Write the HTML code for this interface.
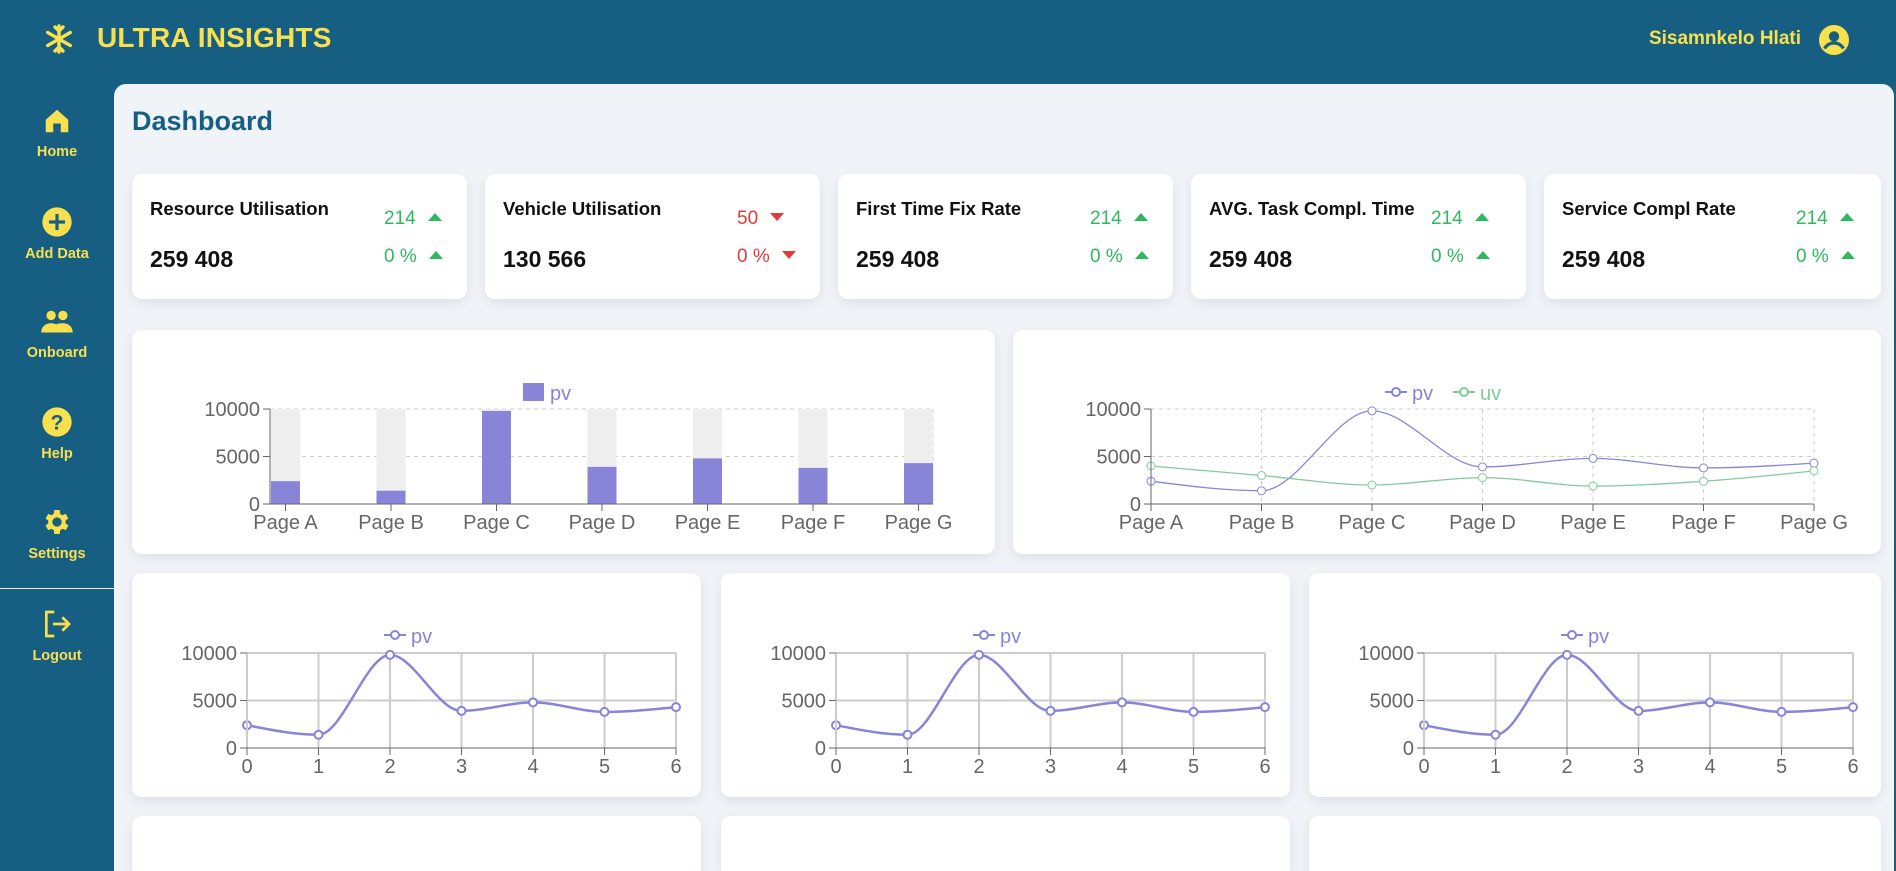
<!DOCTYPE html>
<html><head><meta charset="utf-8">
<style>
*{box-sizing:border-box;margin:0;padding:0}
html,body{width:1896px;height:871px;overflow:hidden}
body{background:#165f82;font-family:"Liberation Sans",Arial,sans-serif;position:relative}
.top{position:absolute;left:0;top:0;width:1896px;height:84px}
.logo{position:absolute;left:44px;top:24px}
.brand{position:absolute;left:97px;top:22px;color:#f8e04e;font-weight:bold;font-size:28px;letter-spacing:0.2px}
.user{position:absolute;right:95px;top:28px;color:#f8e04e;font-weight:bold;font-size:19px}
.uicon{position:absolute;left:1818px;top:24px}
.side a{position:absolute;left:0;width:114px;text-align:center;color:#f8e04e;font-size:14.5px;font-weight:bold;text-decoration:none}
.side svg{display:block;margin:0 auto 8px}
.divl{position:absolute;left:0;top:588px;width:114px;height:1px;background:#e8eef4}
.main{position:absolute;left:114px;top:84px;width:1780px;height:787px;background:#f0f3f8;border-radius:12px 12px 0 0;overflow:hidden}
h1{position:absolute;left:18px;top:22px;color:#165f82;font-size:27px;font-weight:bold}
.card{position:absolute;background:#fff;border-radius:10px;box-shadow:0 4px 12px rgba(0,0,20,0.08)}
.bot{border-radius:10px 10px 0 0;height:55px}
.stat .t{position:absolute;left:18px;top:24px;font-weight:bold;font-size:18.5px;color:#111}
.stat .v{position:absolute;left:18px;top:72px;font-weight:bold;font-size:23px;color:#111}
.stat .r{position:absolute;left:252px;font-size:19px}
.g{color:#2eb860}.rd{color:#e23b3b}
.tri{display:inline-block;width:0;height:0;border-left:7px solid transparent;border-right:7px solid transparent;margin-left:12px;vertical-align:middle}
.up{border-bottom:8px solid #2eb860;margin-top:-4px}
.dn{border-top:8px solid #e23b3b;margin-top:-4px}
svg text{font-family:"Liberation Sans",Arial,sans-serif}
</style></head><body>
<div class="top">
<svg class="logo" width="30" height="30" viewBox="0 0 30 30" stroke="#f8e04e" stroke-width="3.4" fill="none" stroke-linecap="round"><path d="M15 2v26M3.7 8.5l22.6 13M3.7 21.5l22.6-13M11 3l4 4 4-4M11 27l4-4 4 4"/></svg>
<div class="brand">ULTRA INSIGHTS</div>
<div class="user">Sisamnkelo Hlati</div>
<svg class="uicon" width="32" height="32" viewBox="0 0 32 32"><circle cx="16" cy="16" r="15" fill="#f8e04e"/><circle cx="16" cy="12.5" r="5.2" fill="#165f82"/><path d="M6.5 24.5c2.5-4 6-5.5 9.5-5.5s7 1.5 9.5 5.5" stroke="#165f82" stroke-width="3.2" fill="none"/></svg>
</div>
<div class="side">
<a style="top:106px"><svg width="30" height="30" viewBox="0 0 24 24"><path d="M12 3L3 11v10h6v-7h6v7h6V11z" fill="#f8e04e"/></svg>Home</a>
<a style="top:206px"><svg width="32" height="32" viewBox="0 0 24 24"><circle cx="12" cy="12" r="11" fill="#f8e04e"/><path d="M12 6v12M6 12h12" stroke="#165f82" stroke-width="2.4"/></svg>Add Data</a>
<a style="top:307px"><svg width="34" height="30" viewBox="0 0 26 22"><circle cx="8.5" cy="6" r="3.6" fill="#f8e04e"/><circle cx="17.5" cy="6" r="3.6" fill="#f8e04e"/><path d="M1 19c0-5 4-7 7.5-7s7.5 2 7.5 7zM14 19c0-3-1-5-2-6 2-1 4-1 5.5-1 3.5 0 7.5 2 7.5 7z" fill="#f8e04e"/></svg>Onboard</a>
<a style="top:406px"><svg width="32" height="32" viewBox="0 0 24 24"><circle cx="12" cy="12" r="11" fill="#f8e04e"/><text x="12" y="17.5" text-anchor="middle" font-size="16" font-weight="bold" fill="#165f82">?</text></svg>Help</a>
<a style="top:506px"><svg width="32" height="32" viewBox="0 0 24 24"><path fill="#f8e04e" d="M19.4 13a7.5 7.5 0 000-2l2.1-1.6-2-3.5-2.5 1a7.4 7.4 0 00-1.7-1L15 3h-4l-.4 2.9a7.4 7.4 0 00-1.7 1l-2.5-1-2 3.5L6.5 11a7.5 7.5 0 000 2l-2.1 1.6 2 3.5 2.5-1c.5.4 1.1.8 1.7 1L11 21h4l.4-2.9c.6-.3 1.2-.6 1.7-1l2.5 1 2-3.5zM13 15.5a3.5 3.5 0 110-7 3.5 3.5 0 010 7z" transform="translate(-1 0)"/></svg>Settings</a>
<div class="divl"></div>
<a style="top:608px"><svg width="32" height="32" viewBox="0 0 24 24" fill="none" stroke="#f8e04e" stroke-width="2"><path d="M10 3H4v18h6M9 12h12M16 7l5 5-5 5"/></svg>Logout</a>
</div>
<div class="main">
<h1>Dashboard</h1>
<div class="card stat" style="left:18px;top:90px;width:335px;height:125px"><div class="t">Resource Utilisation</div><div class="v">259 408</div><div class="r g" style="top:34px">214<span class="tri up"></span></div><div class="r g" style="top:72px">0 %<span class="tri up"></span></div></div>
<div class="card stat" style="left:371px;top:90px;width:335px;height:125px"><div class="t">Vehicle Utilisation</div><div class="v">130 566</div><div class="r rd" style="top:34px">50<span class="tri dn"></span></div><div class="r rd" style="top:72px">0 %<span class="tri dn"></span></div></div>
<div class="card stat" style="left:724px;top:90px;width:335px;height:125px"><div class="t">First Time Fix Rate</div><div class="v">259 408</div><div class="r g" style="top:34px">214<span class="tri up"></span></div><div class="r g" style="top:72px">0 %<span class="tri up"></span></div></div>
<div class="card stat" style="left:1077px;top:90px;width:335px;height:125px"><div class="t">AVG. Task Compl. Time</div><div class="v">259 408</div><div class="r g" style="top:34px;left:240px">214<span class="tri up"></span></div><div class="r g" style="top:72px;left:240px">0 %<span class="tri up"></span></div></div>
<div class="card stat" style="left:1430px;top:90px;width:337px;height:125px"><div class="t">Service Compl Rate</div><div class="v">259 408</div><div class="r g" style="top:34px">214<span class="tri up"></span></div><div class="r g" style="top:72px">0 %<span class="tri up"></span></div></div>

<div class="card" id="c1" style="left:18px;top:246px;width:863px;height:224px"></div>
<div class="card" id="c2" style="left:899px;top:246px;width:868px;height:224px"></div>
<div class="card" id="c3" style="left:18px;top:489px;width:569px;height:224px"></div>
<div class="card" id="c4" style="left:607px;top:489px;width:569px;height:224px"></div>
<div class="card" id="c5" style="left:1195px;top:489px;width:572px;height:224px"></div>
<div class="card bot" style="left:18px;top:732px;width:569px"></div>
<div class="card bot" style="left:607px;top:732px;width:569px"></div>
<div class="card bot" style="left:1195px;top:732px;width:572px"></div>
</div>
<script>
var pv=[2400,1398,9800,3908,4800,3800,4300],uv=[4000,3000,2000,2780,1890,2390,3490];
var P=['Page A','Page B','Page C','Page D','Page E','Page F','Page G'];
function mono(xs,ys){var n=xs.length,d=[],m=[];for(var i=0;i<n-1;i++)d.push((ys[i+1]-ys[i])/(xs[i+1]-xs[i]));
for(i=0;i<n;i++){if(i==0)m.push(d[0]);else if(i==n-1)m.push(d[n-2]);else{if(d[i-1]*d[i]<=0)m.push(0);else{var h0=xs[i]-xs[i-1],h1=xs[i+1]-xs[i];var p=(d[i-1]*h1+d[i]*h0)/(h0+h1);m.push(Math.sign(d[i])*Math.min(Math.abs(p),2*Math.abs(d[i-1]),2*Math.abs(d[i]))||0);}}}
m[0]=(3*d[0]-m[1])/2; m[n-1]=(3*d[n-2]-m[n-2])/2;
var s='M'+xs[0]+','+ys[0];for(i=0;i<n-1;i++){var h=(xs[i+1]-xs[i])/3;s+='C'+(xs[i]+h)+','+(ys[i]+m[i]*h)+','+(xs[i+1]-h)+','+(ys[i+1]-m[i+1]*h)+','+xs[i+1]+','+ys[i+1];}return s;}
function yl(x0,top,bot){var s='';[[10000,top],[5000,(top+bot)/2],[0,bot]].forEach(function(a){s+='<line x1="'+(x0-7)+'" y1="'+a[1]+'" x2="'+x0+'" y2="'+a[1]+'" stroke="#666"/><text x="'+(x0-10)+'" y="'+(a[1]+7)+'" text-anchor="end" font-size="20" fill="#666">'+a[0]+'</text>';});return s;}
function Y(v,top,bot){return bot-(bot-top)*v/10000}
(function(){var x0=138,x1=801,top=79,bot=174,bw=(x1-x0-30)/6,s='<svg width="863" height="224">';
s+='<line x1="'+x0+'" y1="'+top+'" x2="'+x1+'" y2="'+top+'" stroke="#ccc" stroke-dasharray="4 4"/><line x1="'+x0+'" y1="'+(top+bot)/2+'" x2="'+x1+'" y2="'+(top+bot)/2+'" stroke="#ccc" stroke-dasharray="4 4"/><line x1="'+x1+'" y1="'+top+'" x2="'+x1+'" y2="'+bot+'" stroke="#ccc" stroke-dasharray="4 4"/>';
for(var i=0;i<7;i++){var bx=x0+i*bw+1;s+='<rect x="'+bx+'" y="'+top+'" width="29" height="'+(bot-top)+'" fill="#eee"/><rect x="'+bx+'" y="'+Y(pv[i],top,bot)+'" width="29" height="'+(bot-Y(pv[i],top,bot))+'" fill="#8884d8"/>';
var cx=bx+14.5;s+='<line x1="'+cx+'" y1="'+bot+'" x2="'+cx+'" y2="'+(bot+7)+'" stroke="#666"/><text x="'+cx+'" y="'+(bot+25)+'" text-anchor="middle" font-size="20" fill="#666">'+P[i]+'</text>';}
s+='<line x1="'+x0+'" y1="'+top+'" x2="'+x0+'" y2="'+bot+'" stroke="#666"/><line x1="'+x0+'" y1="'+bot+'" x2="'+x1+'" y2="'+bot+'" stroke="#666"/>'+yl(x0,top,bot);
s+='<rect x="391" y="53" width="21" height="18" fill="#8884d8"/><text x="418" y="70" font-size="20" fill="#8884d8">pv</text></svg>';
document.getElementById('c1').innerHTML=s;})();
(function(){var x0=138,x1=801,top=79,bot=174,st=(x1-x0)/6,s='<svg width="868" height="224">',xs=[];
for(var i=0;i<7;i++)xs.push(x0+i*st);
s+='<line x1="'+x0+'" y1="'+top+'" x2="'+x1+'" y2="'+top+'" stroke="#ccc" stroke-dasharray="4 4"/><line x1="'+x0+'" y1="'+(top+bot)/2+'" x2="'+x1+'" y2="'+(top+bot)/2+'" stroke="#ccc" stroke-dasharray="4 4"/>';
for(i=1;i<7;i++)s+='<line x1="'+xs[i]+'" y1="'+top+'" x2="'+xs[i]+'" y2="'+bot+'" stroke="#ccc" stroke-dasharray="4 4"/>';
[[pv,'#8884d8'],[uv,'#82ca9d']].forEach(function(a){var ys=a[0].map(function(v){return Y(v,top,bot)});s+='<path d="'+mono(xs,ys)+'" fill="none" stroke="'+a[1]+'" stroke-width="1.3"/>';for(var j=0;j<7;j++)s+='<circle cx="'+xs[j]+'" cy="'+ys[j]+'" r="4" fill="#fff" stroke="'+a[1]+'"/>';});
for(i=0;i<7;i++)s+='<line x1="'+xs[i]+'" y1="'+bot+'" x2="'+xs[i]+'" y2="'+(bot+7)+'" stroke="#666"/><text x="'+xs[i]+'" y="'+(bot+25)+'" text-anchor="middle" font-size="20" fill="#666">'+P[i]+'</text>';
s+='<line x1="'+x0+'" y1="'+top+'" x2="'+x0+'" y2="'+bot+'" stroke="#666"/><line x1="'+x0+'" y1="'+bot+'" x2="'+x1+'" y2="'+bot+'" stroke="#666"/>'+yl(x0,top,bot);
s+='<line x1="372" y1="62" x2="394" y2="62" stroke="#8884d8" stroke-width="2"/><circle cx="383" cy="62" r="4" fill="#fff" stroke="#8884d8" stroke-width="2"/><text x="399" y="70" font-size="20" fill="#8884d8">pv</text>';
s+='<line x1="440" y1="62" x2="462" y2="62" stroke="#82ca9d" stroke-width="2"/><circle cx="451" cy="62" r="4" fill="#fff" stroke="#82ca9d" stroke-width="2"/><text x="467" y="70" font-size="20" fill="#82ca9d">uv</text></svg>';
document.getElementById('c2').innerHTML=s;})();
['c3','c4','c5'].forEach(function(id){var x0=115,x1=544,top=80,bot=175,st=(x1-x0)/6,s='<svg width="572" height="224">',xs=[];
for(var i=0;i<7;i++)xs.push(x0+i*st);
s+='<line x1="'+x0+'" y1="'+top+'" x2="'+x1+'" y2="'+top+'" stroke="#ccc" stroke-width="2"/><line x1="'+x0+'" y1="'+(top+bot)/2+'" x2="'+x1+'" y2="'+(top+bot)/2+'" stroke="#ccc" stroke-width="2"/>';
for(i=1;i<7;i++)s+='<line x1="'+xs[i]+'" y1="'+top+'" x2="'+xs[i]+'" y2="'+bot+'" stroke="#ccc" stroke-width="2"/>';
var ys=pv.map(function(v){return Y(v,top,bot)});s+='<path d="'+mono(xs,ys)+'" fill="none" stroke="#8884d8" stroke-width="2.5"/>';
for(i=0;i<7;i++)s+='<circle cx="'+xs[i]+'" cy="'+ys[i]+'" r="4" fill="#fff" stroke="#8884d8" stroke-width="2"/>';
for(i=0;i<7;i++)s+='<line x1="'+xs[i]+'" y1="'+bot+'" x2="'+xs[i]+'" y2="'+(bot+7)+'" stroke="#666"/><text x="'+xs[i]+'" y="'+(bot+25)+'" text-anchor="middle" font-size="20" fill="#666">'+i+'</text>';
s+='<line x1="'+x0+'" y1="'+top+'" x2="'+x0+'" y2="'+bot+'" stroke="#ccc" stroke-width="2"/><line x1="'+x0+'" y1="'+bot+'" x2="'+x1+'" y2="'+bot+'" stroke="#666"/>'+yl(x0,top,bot);
s+='<line x1="252" y1="62" x2="274" y2="62" stroke="#8884d8" stroke-width="2"/><circle cx="263" cy="62" r="4" fill="#fff" stroke="#8884d8" stroke-width="2"/><text x="279" y="70" font-size="20" fill="#8884d8">pv</text></svg>';
document.getElementById(id).innerHTML=s;});
</script>
</body></html>
